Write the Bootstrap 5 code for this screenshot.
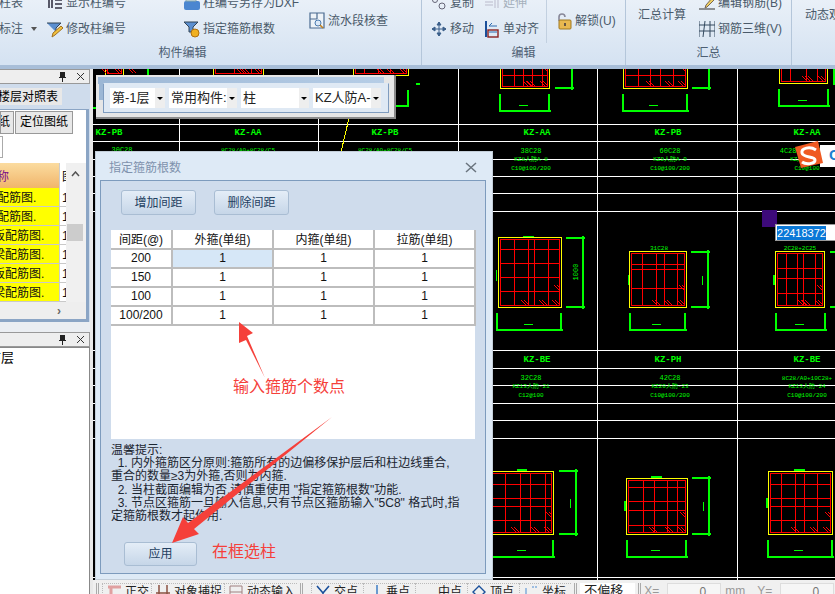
<!DOCTYPE html>
<html lang="zh-CN">
<head>
    <meta charset="UTF-8">
    <meta name="viewport" content="width=device-width, initial-scale=1.0">
    <title>指定箍筋根数</title>
    <link href="https://cdn.jsdelivr.net/npm/bootstrap@5.3.0/dist/css/bootstrap.min.css" rel="stylesheet">
    <style>
        html, body { height: 594px; overflow: hidden; }
        body { font-family: "Liberation Sans", "Noto Sans CJK SC", sans-serif; font-size: 12px; line-height: 14px; color: #000; background: #cfdcec; position: relative; }

        /* ribbon */
        .rb { height: 69px; overflow: hidden; background: linear-gradient(#e9f0f8, #d6e3f2 60px); border-bottom: 4px solid #a8bed8; color: #4a5a6a; }
        .rb-group { height: 65px; border-right: 1px solid #b4c6da; overflow: hidden; flex: none; }
        .rb-g1 { width: 422px; } .rb-g2 { width: 204px; } .rb-g3 { width: 166px; } .rb-g4 { flex: 1; border-right: 0; }
        .rb-body { height: 55px; margin-top: -10px; }
        .rb-label { height: 20px; text-align: center; line-height: 14px; padding-top: 1px; color: #4d5f73; }
        .rb-g1 .rb-label { padding-right: 56px; }
        .rb-col { display: flex; flex-direction: column; flex: none; }
        .rb-item { height: 26px; display: flex; align-items: center; white-space: nowrap; }
        .rb-item svg { flex: none; width: 16px; height: 18px; margin-right: 3px; }
        .rb-big { align-self: flex-start; margin-top: 18px; }
        .rb-line { margin-top: 18px; white-space: nowrap; flex: none; }
        .rb-mute { color: #a5b0bc; }
        .rb-sep { width: 1px; height: 45px; background: #c2d0e0; flex: none; }
        .caret-dn { width: 0; height: 0; border: 3px solid transparent; border-top: 4px solid #555; border-bottom: 0; }
        .m-a { margin-left: -1px; width: 48px; } .m-b { width: 137px; } .m-c { width: 125px; }
        .m-e { margin-left: 9px; width: 53px; } .m-f { width: 62px; } .m-g { margin-left: 9px; }
        .m-h { margin-left: 12px; width: 61px; }
        .m-j { margin-left: 13px; }

        /* left panels */
        .side { width: 93px; height: 525px; flex: none; background: #cfdcec; border-right: 3px solid #e9e9e9; overflow: hidden; }
        .dock-title { height: 15px; background: #eee; border: 1px solid #999; border-left: 0; display: flex; align-items: center; justify-content: flex-end; gap: 9px; padding-right: 4px; }
        .side-tabs { height: 25px; padding-top: 4px; overflow: hidden; }
        .side-tab { width: 62px; height: 17px; background: #e8e8e8; overflow: hidden; white-space: nowrap; text-indent: -2px; line-height: 18px; }
        .side-box { height: 213px; margin-right: 1px; background: #fff; border: solid #8ba5c5; border-width: 1px 3px 3px 0; overflow: hidden; }
        .sub-tabs { display: flex; height: 23px; margin-top: 1px; }
        .sub-tab { background: #e8e8e8; border: 1px solid #999; height: 23px; line-height: 21px; margin-right: 1px; overflow: hidden; white-space: nowrap; }
        .sub-a { width: 14px; text-indent: -3px; } .sub-b { width: 58px; text-align: center; }
        .sub-stub { width: 3px; height: 22px; border: 1px solid #aaa; border-left: 0; margin: 2px 0 5px; }
        .grid-wrap { display: flex; height: 139px; background: #f0f0f0; }
        .grid-main { width: 66px; flex: none; }
        .grid-head { height: 25px; display: flex; background: linear-gradient(#fbdca0, #f1b56a); color: #7a0a8a; line-height: 29px; overflow: hidden; }
        .gc-a { width: 60px; flex: none; overflow: hidden; white-space: nowrap; border-right: 1px solid #ccc; }
        .gc-b { flex: 1; padding-left: 2px; overflow: hidden; }
        .grid-head .gc-b { background: #fff; color: #000; }
        .grid-row { height: 19px; display: flex; background: #ff0; border-bottom: 1px solid #c9c9c9; line-height: 20px; color: #111; overflow: hidden; }
        .grid-row .gc-b { background: #fff; }
        .t-s { margin-left: -3px; display: inline-block; } .t-l { margin-left: -7px; display: inline-block; }
        .grid-scroll { width: 17px; margin-left: 1px; position: relative; }
        .thumb { position: absolute; left: 0; top: 61px; width: 16px; height: 17px; background: #ccc; }
        .scroll-h { height: 18px; background: #eee; text-align: right; padding-right: 25px; color: #666; line-height: 18px; font-weight: bold; }
        .side-gap { height: 10px; background: #ebeef2; }
        .dock-list { height: 250px; background: #fff; border: 1px solid #888; border-left: 0; overflow: hidden; white-space: nowrap; padding-top: 2px; font-size: 13px; line-height: 16px; }
        .dock-list span { margin-left: -12px; display: inline-block; }

        /* canvas and status */
        .work { flex: 1; min-width: 0; height: 525px; }
        .cad { display: block; width: 742px; height: 511px; background: #000; }
        .cad text { font-family: "Liberation Mono", monospace; fill: #0f0; text-anchor: middle; }
        .bar { height: 14px; background: #f0f0f0; overflow: hidden; color: #222; padding-top: 3px; white-space: nowrap; }
        .bar-sep { width: 3px; height: 14px; border: solid #aaa; border-width: 0 1px; flex: none; margin: 0 3px; }
        .bar-tool { display: flex; gap: 4px; height: 14px; padding: 1px 2px 0 4px; flex: none; border: 1px dotted #bbb; border-width: 1px 0 0 1px; line-height: 14px; }
        .bar-wide { padding-right: 5px; }
        .bar-tool svg { width: 14px; height: 14px; flex: none; }
        .bar-gap { width: 5px; flex: none; }
        .bar-combo { width: 55px; height: 14px; background: #fff; padding: 1px 0 0 4px; flex: none; font-size: 13px; }
        .bar-spin { width: 54px; height: 14px; background: #f6f6f6; border: 1px solid #ddd; border-bottom: 0; flex: none; text-align: right; padding: 1px 14px 0 0; color: #777; }
        .bar-gray { color: #999; flex: none; padding-top: 1px; }

        /* floating toolbar */
        .float-tb { position: absolute; left: 96px; top: 75px; width: 300px; height: 44px; background: #e6e6e6; border: solid #8a8a8a; border-width: 0 2px 2px 0; padding-top: 2px; }
        .float-strip { height: 7px; margin: 0 10px 0 2px; background: linear-gradient(90deg, #9cb7d5, #b6cde6); }
        .float-grip { position: absolute; left: 3px; top: 8px; width: 5px; height: 17px; background: #9cb7d5; }
        .float-in { margin: -1px 5px 0 7px; height: 30px; background: #dfe9f4; border: 1px solid #7f9cbf; border-top-color: #dfe9f4; display: flex; gap: 4px; padding: 4px 6px 0; position: relative; }
        .combo-x { width: 55px; height: 20px; background: #fff; display: flex; flex: none; font-size: 13px; line-height: 20px; color: #222; overflow: hidden; white-space: nowrap; }
        .combo-w { width: 68px; }
        .combo-t { flex: 1; padding-left: 2px; overflow: hidden; min-width: 0; }
        .combo-a { width: 10px; flex: none; background: #eee; display: flex; align-items: center; justify-content: center; }
        .combo-a i { width: 0; height: 0; border: 3px solid transparent; border-top: 3px solid #000; border-bottom: 0; }

        /* dialog */
        .dlg { position: absolute; left: 95px; top: 151px; width: 398px; height: 429px; background: #deeaf6; border: 1px solid #c3ced9; }
        .dlg-title { height: 28px; display: flex; justify-content: space-between; align-items: center; padding: 3px 15px 0 13px; color: #7f92ad; }
        .dlg-panel { margin: 0 6px 0 4px; height: 394px; background: #cfdcec; border: 1px solid #7d9bbd; padding: 9px 10px 0; }
        .dlg-btn { --bs-btn-padding-y: 0; --bs-btn-padding-x: 0; --bs-btn-font-size: 12px; --bs-btn-border-radius: 3px; width: 75px; height: 25px; color: #23405f; border: 1px solid #a9bdd3; background: linear-gradient(#e4edf7, #c6d6e8); line-height: 22px; }
        .dlg-btns { display: flex; gap: 18px; padding-left: 10px; margin-bottom: 15px; }
        .dlg-sheet { height: 209px; width: 364px; background: #fff; margin-bottom: 5px; }
        .spec { width: 364px; margin: 0; table-layout: fixed; --bs-table-bg: transparent; border-collapse: collapse; }
        .spec th, .spec td { height: 19px; padding: 0; border: solid #bdbdbd; border-width: 0 2px 2px 0; text-align: center; font-weight: normal; font-size: 12px; line-height: 16px; color: #111; box-shadow: none; }
        .spec .cell-on { background: #d6e7f7; }
        .tips { font-size: 12px; line-height: 13.2px; color: #1b2530; height: 90px; white-space: pre; margin: 0; font-family: inherit; overflow: hidden; }
        .apply-w { width: 73px; margin: 8px 0 0 13px; }
        .apply-w .dlg-btn { width: 73px; height: 24px; }

        /* things lying over the page */
        .marks { position: absolute; left: 0; top: 0; width: 835px; height: 594px; pointer-events: none; }
        .note-red { position: absolute; color: #f5403a; font-size: 16px; line-height: 18px; white-space: nowrap; }
        .note-a { left: 233px; top: 378px; } .note-b { left: 212px; top: 543px; }
        .pick-num { position: absolute; left: 775px; top: 224px; width: 60px; height: 17px; background: #fff; border: 1px solid #999; border-right: 0; padding: 1px 0 0 1px; line-height: 14px; font-size: 11px; white-space: nowrap; }
        .pick-num span { background: #0a78d7; color: #fff; display: inline-block; width: 49px; text-align: center; }
        .sogou-box { position: absolute; left: 820px; top: 145px; width: 15px; height: 22px; background: #fff; color: #1a7fd0; font-weight: bold; font-size: 15px; line-height: 20px; padding-left: 9px; overflow: hidden; }
    </style>
</head>
<body>

<!-- ribbon -->
<div class="rb d-flex">
    <div class="rb-group rb-g1">
        <div class="rb-body d-flex">
            <div class="rb-col m-a">
                <div class="rb-item">柱表</div>
                <div class="rb-item">标注<span class="caret-dn ms-2"></span></div>
            </div>
            <div class="rb-col m-b">
                <div class="rb-item"><svg viewBox="0 0 16 18"><path d="M2 2v12M5 2v12M8 6h7M8 10h7M8 14h7" stroke="#334" stroke-width="1.6" fill="none"/></svg>显示柱编号</div>
                <div class="rb-item"><svg viewBox="0 0 16 18"><path d="M0 3h14l-5 5v4" fill="#5b8fd0" stroke="#345"/><path d="M5 17l1-4 8-7 2 2-8 7z" fill="#f0c040" stroke="#a07020"/></svg>修改柱编号</div>
            </div>
            <div class="rb-col m-c">
                <div class="rb-item"><svg viewBox="0 0 16 18"><rect x="0" y="7" width="16" height="9" rx="2" fill="#4a86d0"/><path d="M2 2h10v5H2z" fill="#dde6f0" stroke="#8aa"/></svg>柱编号另存为DXF</div>
                <div class="rb-item"><svg viewBox="0 0 16 18"><path d="M0 2h14l-5 5v5H5V7z" fill="#5b8fd0" stroke="#345"/><circle cx="11" cy="13" r="4" fill="#f0b020" stroke="#b07010"/></svg>指定箍筋根数</div>
            </div>
            <div class="rb-col rb-big">
                <div class="rb-item"><svg viewBox="0 0 16 18"><path d="M1 1h14v15H1zM8 1v6M1 7h7" fill="#eef3f8" stroke="#4a6a90" stroke-width="1.2"/><circle cx="9" cy="11" r="3" fill="#dbe9f8" stroke="#4a7ab0"/><path d="M11 13l3 3" stroke="#c08020" stroke-width="1.6"/></svg>流水段核查</div>
            </div>
        </div>
        <div class="rb-label">构件编辑</div>
    </div>
    <div class="rb-group rb-g2">
        <div class="rb-body d-flex">
            <div class="rb-col m-e">
                <div class="rb-item"><svg viewBox="0 0 16 18"><circle cx="4" cy="6" r="2.5" fill="none" stroke="#667"/><circle cx="11" cy="12" r="3" fill="none" stroke="#667"/></svg>复制</div>
                <div class="rb-item"><svg viewBox="0 0 16 18"><path d="M8 2v14M1 9h14M8 2l-2 3h4zM8 16l-2-3h4zM1 9l3-2v4zM15 9l-3-2v4z" stroke="#3a5f8a" fill="#3a5f8a"/></svg>移动</div>
            </div>
            <div class="rb-col m-f">
                <div class="rb-item rb-mute"><svg viewBox="0 0 16 18"><path d="M1 5h8M1 8h8M1 11h8M11 3v11M14 3v11" stroke="#bbc" fill="none"/></svg>延伸</div>
                <div class="rb-item"><svg viewBox="0 0 16 18"><path d="M2 1v16" stroke="#1a4f9a" stroke-width="2"/><rect x="4" y="10" width="10" height="7" fill="none" stroke="#8a2020" stroke-width="1.4"/><path d="M5 6h8M5 6l3-3M5 12h8" stroke="#2a6ab0" fill="none"/></svg>单对齐</div>
            </div>
            <div class="rb-sep mt-2"></div>
            <div class="rb-col rb-big m-g">
                <div class="rb-item"><svg viewBox="0 0 16 18"><path d="M3 9V5a3 3 0 0 1 6 0" fill="none" stroke="#889" stroke-width="1.6"/><rect x="3" y="8" width="12" height="9" rx="1" fill="#e8b850" stroke="#a07820"/><rect x="8" y="11" width="2" height="3" fill="#654"/></svg>解锁(U)</div>
            </div>
        </div>
        <div class="rb-label">编辑</div>
    </div>
    <div class="rb-group rb-g3">
        <div class="rb-body d-flex">
            <div class="m-h rb-line">汇总计算</div>
            <div class="rb-col">
                <div class="rb-item"><svg viewBox="0 0 16 18"><path d="M0 15h16" stroke="#333"/><path d="M6 14l1-3 7-8 2 2-8 8z" fill="#f0d060" stroke="#765"/></svg>编辑钢筋(B)</div>
                <div class="rb-item"><svg viewBox="0 0 16 18"><path d="M0 1v16M16 1v16M0 5h16M0 11h16M6 1l-2 16M11 1v16" stroke="#33495f" fill="none"/></svg>钢筋三维(V)</div>
            </div>
        </div>
        <div class="rb-label">汇总</div>
    </div>
    <div class="rb-group rb-g4">
        <div class="rb-body d-flex"><div class="m-j rb-line">动态观察</div></div>
    </div>
</div>

<div class="d-flex">
    <!-- left docks -->
    <div class="side">
        <div class="dock-title mt-0">
            <svg width="9" height="11" viewBox="0 0 9 11"><path d="M2 1h5v5h1v1H1V6h1zM4 7h1v4H4z" fill="#222"/></svg>
            <svg width="9" height="9" viewBox="0 0 9 9"><path d="M1 1l7 7M8 1l-7 7" stroke="#333"/></svg>
        </div>
        <div class="side-tabs"><div class="side-tab">楼层对照表</div></div>
        <div class="side-box">
            <div class="sub-tabs"><div class="sub-tab sub-a">纸</div><div class="sub-tab sub-b">定位图纸</div></div>
            <div class="sub-stub"></div>
            <div class="grid-wrap">
                <div class="grid-main">
                    <div class="grid-head"><div class="gc-a"><span class="t-s">称</span></div><div class="gc-b">图</div></div>
                    <div class="grid-row"><div class="gc-a"><span class="t-s">配筋图.</span></div><div class="gc-b">1</div></div>
                    <div class="grid-row"><div class="gc-a"><span class="t-s">配筋图.</span></div><div class="gc-b">1</div></div>
                    <div class="grid-row"><div class="gc-a"><span class="t-l">板配筋图.</span></div><div class="gc-b">1</div></div>
                    <div class="grid-row"><div class="gc-a"><span class="t-l">梁配筋图.</span></div><div class="gc-b">1</div></div>
                    <div class="grid-row"><div class="gc-a"><span class="t-l">板配筋图.</span></div><div class="gc-b">1</div></div>
                    <div class="grid-row"><div class="gc-a"><span class="t-l">梁配筋图.</span></div><div class="gc-b">1</div></div>
                </div>
                <div class="grid-scroll">
                    <svg class="d-block mx-auto mt-2" width="9" height="6" viewBox="0 0 9 6"><path d="M1 5l3.500-4L8 5" fill="none" stroke="#555" stroke-width="1.500"/></svg>
                    <div class="thumb"></div>
                </div>
            </div>
            <div class="scroll-h">›</div>
        </div>
        <div class="side-gap"></div>
        <div class="dock-title">
            <svg width="9" height="11" viewBox="0 0 9 11"><path d="M2 1h5v5h1v1H1V6h1zM4 7h1v4H4z" fill="#222"/></svg>
            <svg width="9" height="9" viewBox="0 0 9 9"><path d="M1 1l7 7M8 1l-7 7" stroke="#333"/></svg>
        </div>
        <div class="dock-list"><span>前层</span></div>
    </div>

    <!-- drawing area and status bar -->
    <div class="work">
        <svg class="cad" id="cad" viewBox="93 69 742 511" shape-rendering="crispEdges"></svg>
        <div class="bar d-flex">
            <div class="bar-sep"></div>
            <div class="bar-tool"><svg viewBox="0 0 14 14"><path d="M1 2h13M4 2v12" stroke="#e0a0a0" stroke-width="3" fill="none"/></svg>正交</div>
            <div class="bar-tool"><svg viewBox="0 0 14 14"><path d="M3 0v14M11 0v14M0 8h14" stroke="#8a5040" stroke-width="1.500" fill="none"/></svg>对象捕捉</div>
            <div class="bar-tool"><svg viewBox="0 0 14 14"><path d="M1 1h12M1 7h12M1 1v13M13 1v13" stroke="#a08080" fill="none"/></svg>动态输入</div>
            <div class="bar-sep"></div>
            <div class="bar-gap"></div>
            <div class="bar-tool bar-wide"><svg viewBox="0 0 14 14"><path d="M1 1l6 7 6-7M7 8v6" stroke="#1a4f9a" stroke-width="1.600" fill="none"/></svg>交点</div>
            <div class="bar-tool bar-wide"><svg viewBox="0 0 14 14"><path d="M9 0v14" stroke="#6a9ad0" stroke-width="2"/></svg>垂点</div>
            <div class="bar-tool bar-wide"><svg viewBox="0 0 14 14"><path d="M0 10h14" stroke="#1a4f9a" stroke-width="2"/></svg>中点</div>
            <div class="bar-tool bar-wide"><svg viewBox="0 0 14 14"><path d="M7 1l6 6-6 6-6-6z" fill="none" stroke="#1a4f9a" stroke-width="1.400"/></svg>顶点</div>
            <div class="bar-tool bar-wide"><svg viewBox="0 0 14 14"><path d="M2 3v8M9 1v2M12 1v2M4 11h6" stroke="#4a8ad0" fill="none"/></svg>坐标</div>
            <div class="bar-sep"></div>
            <div class="bar-combo">不偏移</div>
            <div class="bar-sep"></div>
            <div class="bar-gray me-2">X=</div>
            <div class="bar-spin">0</div>
            <div class="bar-gray mx-1">mm</div>
            <div class="bar-gray mx-2">Y=</div>
            <div class="bar-spin">0</div>
        </div>
    </div>
</div>

<!-- floating layer toolbar -->
<div class="float-tb">
    <div class="float-strip"></div>
    <div class="float-grip"></div>
    <div class="float-in">
        <div class="combo-x"><div class="combo-t">第-1层</div><div class="combo-a"><i></i></div></div>
        <div class="combo-x combo-w"><div class="combo-t">常用构件:</div><div class="combo-a"><i></i></div></div>
        <div class="combo-x combo-w"><div class="combo-t">柱</div><div class="combo-a"><i></i></div></div>
        <div class="combo-x combo-w"><div class="combo-t">KZ人防A-</div><div class="combo-a"><i></i></div></div>
    </div>
</div>

<!-- dialog -->
<div class="dlg">
    <div class="dlg-title">
        <span>指定箍筋根数</span>
        <svg width="12" height="11" viewBox="0 0 12 11"><path d="M1 1l10 9M11 1L1 10" stroke="#6a747e" stroke-width="1.500"/></svg>
    </div>
    <div class="dlg-panel">
        <div class="dlg-btns">
            <button type="button" class="btn dlg-btn">增加间距</button>
            <button type="button" class="btn dlg-btn">删除间距</button>
        </div>
        <div class="dlg-sheet">
            <table class="table spec">
                <colgroup><col width="61"><col width="101"><col width="101"><col width="101"></colgroup>
                <thead><tr><th>间距(@)</th><th>外箍(单组)</th><th>内箍(单组)</th><th>拉筋(单组)</th></tr></thead>
                <tbody>
                    <tr><td>200</td><td class="cell-on">1</td><td>1</td><td>1</td></tr>
                    <tr><td>150</td><td>1</td><td>1</td><td>1</td></tr>
                    <tr><td>100</td><td>1</td><td>1</td><td>1</td></tr>
                    <tr><td>100/200</td><td>1</td><td>1</td><td>1</td></tr>
                </tbody>
            </table>
        </div>
        <pre class="tips">温馨提示:
  1. 内外箍筋区分原则:箍筋所有的边偏移保护层后和柱边线重合,
重合的数量≥3为外箍,否则为内箍.
  2. 当柱截面编辑为否,请慎重使用 "指定箍筋根数"功能.
  3. 节点区箍筋一旦输入信息,只有节点区箍筋输入"5C8" 格式时,指
定箍筋根数才起作用.</pre>
        <div class="apply-w"><button type="button" class="btn dlg-btn">应用</button></div>
    </div>
</div>

<!-- annotations on top -->
<div class="sogou-box">C</div>
<svg class="marks" viewBox="0 0 835 594">
    <path d="M239 322L253 333L247 336L265 378L246 340L239 343Z" fill="#f5403a"/>
    <path d="M332 417L194 529L199 534L172 543L183 517L188 523Z" fill="#f5403a"/>
    <path d="M795 147L818 141L823 163L801 168Z" fill="#ef5a22"/>
    <path d="M816 150c-6-4-15-2-14 3s13 3 13 7-9 5-13 2" fill="none" stroke="#fff" stroke-width="3"/>
    <rect x="762" y="210" width="15" height="17" fill="#3d0a7a"/>
</svg>
<div class="pick-num"><span>22418372</span></div>
<div class="note-red note-a">输入箍筋个数点</div>
<div class="note-red note-b">在框选柱</div>

<script>
    const G = '#0f0', R = '#f00', Y = '#ff0', W = '#fff';
    let out = '';

    function line(x1, y1, x2, y2, c, w) {
        out += `<line x1="${x1}" y1="${y1}" x2="${x2}" y2="${y2}" stroke="${c}" stroke-width="${w || 1}"/>`;
    }
    function text(x, y, s, size, bold) {
        out += `<text x="${x}" y="${y}" font-size="${size}"${bold ? ' font-weight="bold"' : ''}>${s}</text>`;
    }

    // section with yellow outline, red bars, hatch marks
    function section(x1, y1, x2, y2, vs, hs) {
        out += `<rect x="${x1 + .5}" y="${y1 + .5}" width="${x2 - x1}" height="${y2 - y1}" fill="none" stroke="${Y}"/>`;
        out += `<rect x="${x1 + 2.5}" y="${y1 + 2.5}" width="${x2 - x1 - 4}" height="${y2 - y1 - 4}" fill="none" stroke="${R}"/>`;
        vs.forEach(v => line(v, y1 + 2, v, y2 - 2, R));
        hs.forEach(h => line(x1 + 2, h, x2 - 2, h, R));
        [x1 + 26, x2 - 19, x2 - 6].forEach(h => {
            for (let k = 0; k < 2; k++) line(h + k * 3 - 3, y2 - 7, h + k * 3 + 2, y2 - 2, R);
        });
        line(x2 - 7, y2 - 22, x2 - 2, y2 - 17, R);
        line(x2 - 4, y2 - 22, x2 - 2, y2 - 20, R);
    }
    function bracket(x1, x2, y1, y2, tx, ty) {
        line(x1, y1, x1, y2, G, 2);
        line(x2, y1, x2, y2, G, 2);
        line(x1 - 1, y2, x2 + 2, y2, G, 2);
        line(tx, ty, tx + 9, ty, G);
    }
    function side(x1, x2, y1, y2, ty) {
        line(x1, y1, x2 + 2, y1, G, 2);
        if (y2 !== null) line(x1, y2, x2 + 2, y2, G, 2);
        line(x2, y1 - 2, x2, (y2 === null ? y1 : y2) + 2, G, 2);
        if (ty) line(x2 - 6, ty, x2 - 6, ty + 9, G);
    }

    // grid of the drawing sheet
    [124, 141, 159, 176, 193, 211, 350, 368, 385, 403, 420, 438, 577].forEach(y => line(93, y + .5, 835, y + .5, W));
    [179, 318, 458, 597, 737].forEach(x => line(x + .5, 69, x + .5, 580, W));

    // top row, cut off by the ribbon
    section(105, 60, 123, 75, [], []);
    section(213, 60, 263, 75, [234, 251], []);
    section(353, 60, 408, 75, [364, 378, 390], []);
    section(500, 60, 549, 88, [514, 523, 532, 542], [75]);
    section(623, 60, 687, 88, [638, 650, 660, 673], [75]);
    section(779, 60, 827, 83, [790, 806, 817], []);
    line(148, 69, 148, 76, G, 2);
    line(395, 106, 408, 106, G, 2); line(408, 90, 408, 107, G, 2);
    line(416, 84, 420, 84, G, 2);
    line(93, 108, 97, 108, G, 2);
    bracket(500, 549, 94, 111, 519, 105); side(555, 572, 88, null);
    line(572, 69, 572, 88, G, 2);
    bracket(623, 687, 94, 111, 649, 105); side(692, 709, 88, null);
    line(709, 69, 709, 88, G, 2);
    bracket(779, 828, 89, 106, 798, 100);
    line(834, 69, 834, 85, G, 2);

    // bold titles
    [[109, 'KZ-PB'], [248, 'KZ-AA'], [385, 'KZ-PB'], [537, 'KZ-AA'], [668, 'KZ-PB'], [807, 'KZ-AA']].forEach(t => text(t[0], 135, t[1], 9, true));
    [[537, 'KZ-BE'], [668, 'KZ-PH'], [807, 'KZ-BE']].forEach(t => text(t[0], 362, t[1], 9, true));

    // spec text under the titles
    text(122, 152, '30C28', 7); text(248, 152, '8C28/A0+8C28/C5', 6); text(385, 152, '8C28/A0+8C28/C5', 6);
    [[531, '38C28', 'KZ8人防A-8', 'C10@100/200'], [670, '60C28', 'KZ9人防A-9', 'C10@100/200'], [807, '4C28/A0+10C28', 'KZ人防A-10', 'C10@100']].forEach(t => {
        text(t[0], 153, t[1], 7); text(t[0], 161, t[2], 6); text(t[0], 170, t[3], 6);
    });
    [[531, '32C28', 'KZ13人防-21', 'C12@100'], [670, '42C28', 'KZ20人防-23', 'C10@100/200'], [807, '8C28/A0+10C28+', 'KZ13人防-24', 'C10@100/200']].forEach(t => {
        text(t[0], 380, t[1], t[1].length > 6 ? 6 : 7); text(t[0], 388, t[2], 6); text(t[0], 397, t[3], 6);
    });

    // middle row
    section(498, 237, 561, 307, [514, 528, 534, 548], [249, 263, 277, 291]);
    line(523, 236, 534, 236, G); line(496, 270, 496, 281, G);
    side(566, 583, 238, 307);
    out += `<text x="0" y="0" font-size="7" transform="translate(578 272) rotate(-90)">1000</text>`;
    bracket(497, 561, 313, 330, 524, 324);
    section(629, 251, 686, 307, [642, 656, 664, 677], [264, 269, 288]);
    text(659, 250, '31C28', 6); line(628, 275, 628, 285, G);
    side(691, 708, 252, 307, 276);
    bracket(630, 685, 313, 330, 652, 324);
    section(775, 251, 824, 307, [786, 797, 803, 815], [268, 278, 293]);
    text(800, 250, '2C28+2C25', 6); line(774, 275, 774, 285, G, 2);
    line(830, 252, 835, 252, G, 2); line(830, 307, 835, 307, G, 2);
    bracket(776, 825, 313, 330, 795, 324);

    // bottom row
    section(488, 471, 553, 534, [505, 520, 530, 545], [484, 498, 506, 520]);
    line(517, 470, 527, 470, G, 2);
    side(559, 576, 471, 534, 499);
    bracket(490, 553, 540, 557, 517, 550);
    section(626, 478, 687, 534, [643, 654, 667, 677], [487, 501, 510, 525]);
    line(651, 477, 662, 477, G, 2); line(625, 501, 625, 511, G, 2);
    side(692, 709, 478, 534, 502);
    bracket(627, 686, 540, 557, 651, 550);
    section(768, 471, 832, 534, [781, 795, 804, 817], [484, 498, 506, 520]);
    line(794, 470, 805, 470, G, 2); line(767, 498, 767, 508, G, 2);
    bracket(768, 832, 540, 557, 794, 550);

    // stray yellow leader
    line(349, 118, 341, 152, Y);

    document.getElementById('cad').innerHTML = out;
</script>
<script src="https://cdn.jsdelivr.net/npm/bootstrap@5.3.0/dist/js/bootstrap.bundle.min.js"></script>
</body>
</html>
